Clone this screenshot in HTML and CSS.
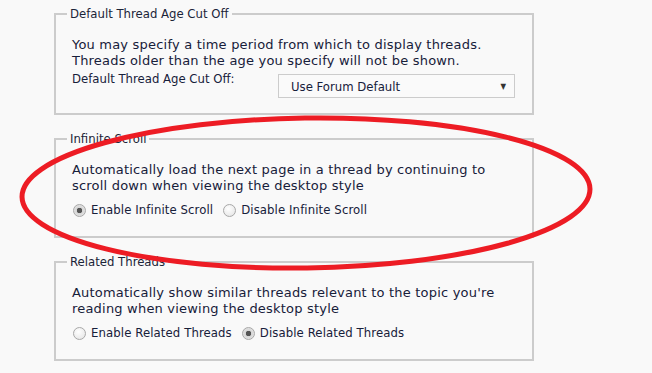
FILE: index.html
```html
<!DOCTYPE html>
<html lang="en">
  <head>
    <meta charset="UTF-8" />
    <title>Thread Display Options</title>
    <link rel="stylesheet" href="styles.css">
  </head>
  <body>
    <div class="options">
      <!-- Thread age -->
      <fieldset class="group">
        <legend>Default Thread Age Cut Off</legend>
        <p class="desc">You may specify a time period from which to display threads.<br>Threads older than the age you specify will not be shown.</p>
        <div class="select-row">
          <label class="label" for="age">Default Thread Age Cut Off:</label>
          <div class="select" id="age">
            <span>Use Forum Default</span>
            <span class="arrow">&#9660;</span>
          </div>
        </div>
      </fieldset>

      <!-- Infinite scroll -->
      <fieldset class="group">
        <legend>Infinite Scroll</legend>
        <p class="desc">Automatically load the next page in a thread by continuing to<br>scroll down when viewing the desktop style</p>
        <div class="radio-row">
          <label class="radio"><input type="radio" name="scroll" checked> Enable Infinite Scroll</label>
          <label class="radio"><input type="radio" name="scroll"> Disable Infinite Scroll</label>
        </div>
      </fieldset>

      <!-- Related threads -->
      <fieldset class="group">
        <legend>Related Threads</legend>
        <p class="desc">Automatically show similar threads relevant to the topic you're<br>reading when viewing the desktop style</p>
        <div class="radio-row">
          <label class="radio"><input type="radio" name="related"> Enable Related Threads</label>
          <label class="radio"><input type="radio" name="related" checked> Disable Related Threads</label>
        </div>
      </fieldset>
    </div>

    <!-- red marker drawn over the screenshot -->
    <svg class="marker" width="652" height="373" viewBox="0 0 652 373">
      <ellipse cx="306" cy="193" rx="284" ry="75" transform="rotate(-0.8 306 193)" fill="none" stroke="#ed1c24" stroke-width="5" />
    </svg>
  </body>
</html>
```

FILE: styles.css
```css
body {
  margin: 0;
  background: #f9f9f9;
  font-family: "DejaVu Sans", Verdana, sans-serif;
  color: #17203a;
  position: relative;
  height: 373px;
  overflow: hidden;
}

.options {
  padding: 6px 0 0 54px;
  display: flex;
  flex-direction: column;
  gap: 16px;
}

/* Cajas */
.group {
  margin: 0;
  border: 2px solid #cccccc;
  padding: 0 16px 0 11px;
  box-sizing: content-box;
  width: 449px;
}

.group legend {
  padding: 0 3px;
  font-family: "DejaVu Sans Condensed", Tahoma, sans-serif;
  font-size: 13px;
  line-height: 16px;
  color: #1b2438;
}

.desc {
  margin: 15px 0 0 5px;
  font-size: 13px;
  letter-spacing: 0.2px;
  line-height: 16px;
}

.select-row {
  display: flex;
  justify-content: space-between;
  align-items: flex-start;
  margin: 2px 0 0 5px;
  padding-bottom: 15px;
}

.label {
  font-family: "DejaVu Sans Condensed", Tahoma, sans-serif;
  font-size: 13px;
  line-height: 16px;
}

.select {
  margin-top: 3px;
  margin-right: 1px;
  border: 1px solid #cccccc;
  background: #fafafa;
  display: flex;
  align-items: center;
  justify-content: space-between;
  padding: 0 8px 0 12px;
  box-sizing: border-box;
  width: 237px;
  height: 24px;
  font-family: "DejaVu Sans Condensed", Tahoma, sans-serif;
  font-size: 13px;
}

.select .arrow {
  font-size: 8px;
  color: #333;
}

/* Opciones */
.radio-row {
  display: flex;
  gap: 5px;
  margin: 7px 0 0 1px;
  padding-bottom: 17px;
}

.radio {
  display: flex;
  align-items: center;
  gap: 5px;
  font-family: "DejaVu Sans Condensed", Tahoma, sans-serif;
  font-size: 13px;
  letter-spacing: 0.1px;
  line-height: 18px;
}

.radio input {
  appearance: none;
  margin: 0 0 0 5px;
  width: 13px;
  height: 13px;
  border-radius: 50%;
  border: 1px solid #a8a8a8;
  background: radial-gradient(circle at 40% 35%, #ffffff, #e2e2e2);
  box-sizing: border-box;
}

.radio input:checked {
  background: radial-gradient(circle, #555 0 2.5px, #d6d6d6 3px, #ececec);
}

/* Marca roja */
.marker {
  position: absolute;
  top: 0;
  left: 0;
  pointer-events: none;
}
```
